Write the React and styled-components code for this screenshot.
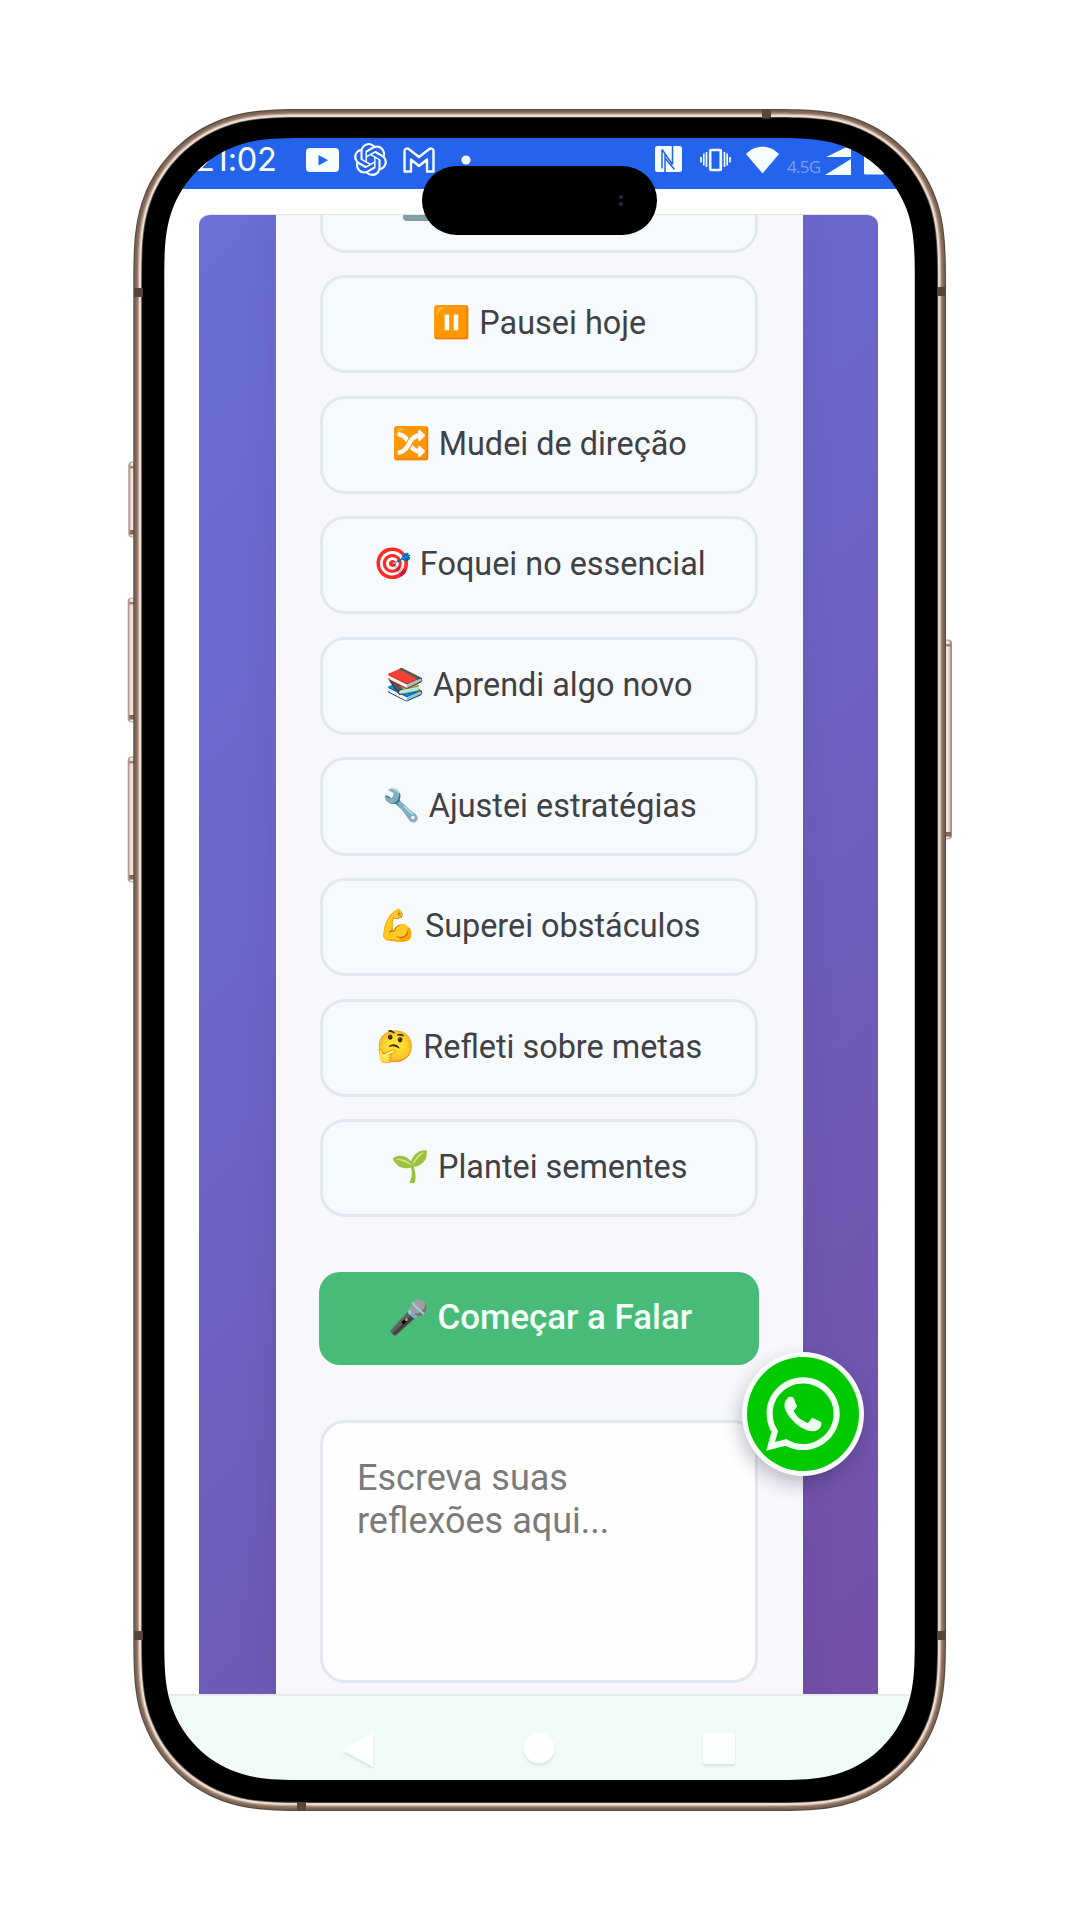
import React from "react";
import styled, { createGlobalStyle, css } from "styled-components";
import { SiOpenai } from "react-icons/si";
import { FaWhatsapp } from "react-icons/fa";

const GlobalStyle = createGlobalStyle`
  * { box-sizing: border-box; }
  html, body { margin: 0; padding: 0; background: #fff; }
  body { font-family: Roboto, "Liberation Sans", sans-serif; }
`;

const Stage = styled.main`
  position: relative;
  width: 1080px;
  height: 1920px;
  padding: 138px 165px 140px 164px;
  overflow: hidden;
  background: #fff;
`;

const Screen = styled.section`
  width: 751px;
  height: 1642px;
  display: flex;
  flex-direction: column;
  overflow: hidden;
  border-radius: 90px;
  background: #fff;
`;

const StatusBar = styled.header`
  flex: none;
  height: 51px;
  padding: 0 31px 8px 31px;
  display: flex;
  align-items: center;
  justify-content: space-between;
  background: #2463eb;
  color: #f6fdff;
`;

const StatusGroup = styled.div`
  height: 100%;
  display: flex;
  align-items: center;
`;

const Clock = styled.span`
  width: 111px;
  font: 400 32.5px/40px Inter, "Open Sans", sans-serif;
  letter-spacing: -0.2px;
`;

const Glyph = styled.span`
  display: flex;
  margin-right: ${(p) => p.$after || 0}px;
  svg { display: block; }
`;

const Network = styled.span`
  width: 38px;
  padding-top: 14px;
  font: 400 17px/20px "Open Sans", sans-serif;
  letter-spacing: -0.7px;
  color: #7ba0f6;
`;

const Page = styled.div`
  flex: none;
  height: 1505px;
  padding: 25px 37px 0 35px;
  background: #fffffe;
`;

const Backdrop = styled.div`
  height: 1480px;
  border-top: 1px solid #e4e3e8;
  border-radius: 11px 11px 0 0;
  padding: 0 75px 0 77px;
  overflow: hidden;
  background: linear-gradient(135deg, #6a70d5 0%, #6c66c9 38%, #6e5cb9 65%, #734fa7 100%);
`;

const Card = styled.div`
  height: 100%;
  padding: 0 45px 0 44px;
  background: #f8f7fc;
  box-shadow: 0 0 30px rgba(60, 50, 90, 0.15);
`;

const Options = styled.div`
  display: flex;
  flex-direction: column;
  gap: 22.3px;
`;

const Option = styled.button`
  width: 100%;
  height: 98.3px;
  padding: 0 0 2px 1px;
  display: flex;
  align-items: center;
  justify-content: center;
  gap: 8.5px;
  border: 3px solid #e2e8f0;
  border-radius: 25px;
  background: #f6fafd;
  color: #404146;
  font: 400 32.4px/40px Roboto, sans-serif;
  white-space: nowrap;
  ${(p) => p.$cut && css`
    height: 37.7px;
    border-top: 0;
    border-radius: 0 0 25px 25px;
    padding: 0 0 0 80px;
    align-items: flex-start;
    justify-content: flex-start;
  `}
`;

const CutBadge = styled.span`
  width: 38px;
  height: 6px;
  border-radius: 0 0 4px 4px;
  background: #7fa0a5;
`;

const Emoji = styled.span`
  width: ${(p) => p.$size + 7}px;
  display: flex;
  justify-content: center;
  font: 400 ${(p) => p.$size}px/40px "Noto Color Emoji", sans-serif;
`;

const SpeakButton = styled(Option)`
  height: 93px;
  width: 440px;
  margin: 54.8px 0 0 -1px;
  padding-left: 3px;
  border: 0;
  border-radius: 21px;
  background: #49bb79;
  color: #f2fff8;
  font-size: 34.9px;
  font-weight: 500;
`;

const NoteField = styled.div`
  height: 263px;
  margin-top: 55px;
  padding: 34px;
  border: 3px solid #e2e7f1;
  border-radius: 25px;
  background: #fefefe;
  color: #7a7a7a;
`;

const Placeholder = styled.p`
  margin: 0;
  width: 340px;
  font: 400 36px/42.5px Roboto, sans-serif;
`;

const NavBar = styled.nav`
  flex: 1;
  padding: 36px 180px 0 178px;
  display: flex;
  justify-content: space-between;
  border-top: 2px solid #e6eced;
  background: #f0fbf8;
  svg { display: block; filter: drop-shadow(0 2px 1px rgba(120, 130, 130, 0.2)); }
`;

const WhatsButton = styled.div`
  position: absolute;
  left: 742px;
  top: 1352px;
  width: 122px;
  height: 124px;
  display: flex;
  align-items: center;
  justify-content: center;
  border: 5px solid #f7fdf8;
  border-radius: 50%;
  background: #00c900;
  color: #effff2;
  box-shadow: -2px 8px 18px rgba(40, 30, 60, 0.28);
`;

const Island = styled.div`
  position: absolute;
  left: 422px;
  top: 165.5px;
  width: 235px;
  height: 69px;
  padding-right: 34px;
  display: flex;
  flex-direction: column;
  align-items: flex-end;
  justify-content: center;
  gap: 3px;
  border-radius: 35px;
  background: #000;
`;

const Sensor = styled.i`
  width: 4px;
  height: 4px;
  border-radius: 50%;
  background: #25255c;
`;

const Bezel = styled.svg`
  position: absolute;
  left: 0;
  top: 0;
  pointer-events: none;
`;

const options = [
  ["⏸️", "Pausei hoje"],
  ["🔀", "Mudei de direção"],
  ["🎯", "Foquei no essencial"],
  ["📚", "Aprendi algo novo"],
  ["🔧", "Ajustei estratégias"],
  ["💪", "Superei obstáculos"],
  ["🤔", "Refleti sobre metas"],
  ["🌱", "Plantei sementes"],
];

// Continuous-curvature rounded rectangle.
function smoothRect(l, t, r, b, k) {
  const corner = (x, y, sx, sy, flip) => {
    const at = (u, v) => {
      const [a, c] = flip ? [v, u] : [u, v];
      return `${x + sx * a * k} ${y + sy * c * k}`;
    };
    return `${at(0, 1.3)} C${at(0, 1.02)} ${at(0, 0.825)} ${at(0.0722, 0.63149)} C${at(0.168, 0.37282)} ${at(0.37282, 0.168)} ${at(0.63149, 0.0722)} C${at(0.825, 0)} ${at(1.02, 0)} ${at(1.3, 0)}`;
  };
  return `M${corner(l, t, 1, 1)} L${corner(r, t, -1, 1, true)} L${corner(r, b, -1, -1)} L${corner(l, b, 1, -1, true)}Z`;
}

const innerEdge = smoothRect(164.3, 138, 914.8, 1780, 113);
const bandEdge = smoothRect(150, 124, 929, 1795, 125);
const rings = [
  [0, "#5b4a40"],
  [1.2, "#7d6656"],
  [3.2, "#93796a"],
  [4.6, "#c3a999"],
  [5.8, "#ecdcd3"],
  [7.9, "#5f5048"],
  [8.8, "#000000"],
];

const sideKeys = [
  [128.8, 462, 75],
  [128.2, 598, 124],
  [128.2, 757, 125],
  [943.5, 640, 199],
];

const bands = [
  [762, 109.5, 9, 9],
  [297, 1802, 9, 9],
  [134, 288, 9, 9],
  [937, 287, 9, 9],
  [134, 1631, 9, 9],
  [937, 1631, 9, 9],
];

function Frame() {
  return (
    <Bezel width="1080" height="1920" viewBox="0 0 1080 1920">
      <defs>
        <linearGradient id="key" x1="0" x2="1">
          <stop offset="0" stopColor="#b59c8c" />
          <stop offset="0.35" stopColor="#f3e9e2" />
          <stop offset="0.7" stopColor="#ead9cf" />
          <stop offset="1" stopColor="#8d7465" />
        </linearGradient>
      </defs>
      {sideKeys.map(([x, y, h]) => (
        <g key={y}>
          <rect x={x} y={y} width="8" height={h} rx="3" fill="url(#key)" stroke="#9d8778" strokeWidth="0.8" />
          <rect x={x + 1} y={y + 4} width="6.5" height="2.4" fill="#9b8272" />
          <rect x={x + 1} y={y + h - 7} width="6.5" height="4.5" fill="#83695a" />
        </g>
      ))}
      {rings.map(([d, fill], i) => (
        <path
          key={d}
          fillRule="evenodd"
          fill={fill}
          d={smoothRect(133.3 + d, 109 + d, 946 - d, 1811 - d, 140 - d) + (i === rings.length - 1 ? innerEdge : bandEdge)}
        />
      ))}
      {bands.map(([x, y, w, h]) => (
        <rect key={`${x}-${y}`} x={x} y={y} width={w} height={h} fill="#56463d" />
      ))}
    </Bezel>
  );
}

function Status() {
  return (
    <StatusBar>
      <StatusGroup>
        <Clock>21:02</Clock>
        <Glyph $after={15}>
          <svg width="33" height="24" viewBox="0 0 33 24">
            <rect width="33" height="24" rx="4" fill="currentColor" />
            <path d="M12.5 7v10.5L22 12.3z" fill="#2463eb" />
          </svg>
        </Glyph>
        <Glyph $after={16}><SiOpenai size={33} /></Glyph>
        <Glyph $after={26}>
          <svg width="32" height="26" viewBox="0 0 32 26" fill="none" stroke="currentColor" strokeWidth="2.4" strokeLinejoin="round">
            <path d="M1.5 24.500V3.500C2 1.500 4.500 1 6 2.200L16 10l10-7.800c1.500-1.200 4-.7 4.500 1.300v21h-6.500V12.500L16 19 8 12.500v12z" />
          </svg>
        </Glyph>
        <Glyph>
          <svg width="10" height="10"><circle cx="5" cy="5" r="4.600" fill="currentColor" /></svg>
        </Glyph>
      </StatusGroup>
      <StatusGroup>
        <Glyph $after={18}>
          <svg width="27" height="27" viewBox="0 0 27 27">
            <rect width="27" height="26" rx="2.500" fill="currentColor" />
            <g fill="none" stroke="#2463eb" strokeWidth="1.500">
              <path d="M7 3.500v19M17.500 0v18.500M7 3.500L17.500 18.500M10 8v18M10 12l9.500 11.500" />
            </g>
          </svg>
        </Glyph>
        <Glyph $after={15}>
          <svg width="31" height="24" viewBox="0 0 31 24" fill="none" stroke="currentColor">
            <rect x="10.200" y="2" width="10.600" height="20" rx="1" strokeWidth="2.600" />
            <path d="M6.500 4v15M24.500 4v15M3.800 5.500v12M27.200 5.500v12M1 9v5.500M30 9v5.500" strokeWidth="1.700" />
          </svg>
        </Glyph>
        <Glyph $after={8}>
          <svg width="33" height="28" viewBox="0 0 33 28">
            <path d="M0 8C9-1.800 24-1.800 33 8L16.500 27.500z" fill="currentColor" />
          </svg>
        </Glyph>
        <Network>4.5G</Network>
        <Glyph $after={13}>
          <svg width="26" height="32" viewBox="0 0 26 32" fill="currentColor">
            <path d="M1 13L26 1v12zM0 31L26 15v16z" />
          </svg>
        </Glyph>
        <Glyph>
          <svg width="20" height="30" viewBox="0 0 20 30" fill="currentColor">
            <path d="M0 5h4V1h12v4h4v23a1.500 1.500 0 0 1-1.500 1.500h-17A1.500 1.500 0 0 1 0 28z" />
          </svg>
        </Glyph>
      </StatusGroup>
    </StatusBar>
  );
}

export default function App() {
  return (
    <>
      <GlobalStyle />
      <Stage>
        <Screen>
          <Status />
          <Page>
            <Backdrop>
              <Card>
                <Options>
                  <Option $cut><CutBadge /></Option>
                  {options.map(([emoji, label]) => (
                    <Option key={label}>
                      <Emoji $size={31}>{emoji}</Emoji>
                      <span>{label}</span>
                    </Option>
                  ))}
                </Options>
                <SpeakButton>
                  <Emoji $size={33}>🎤</Emoji>
                  <span>Começar a Falar</span>
                </SpeakButton>
                <NoteField>
                  <Placeholder>Escreva suas<br />reflexões aqui...</Placeholder>
                </NoteField>
              </Card>
            </Backdrop>
          </Page>
          <NavBar>
            <svg width="32" height="36"><path d="M0 18L31 1v34z" fill="#fdfffe" /></svg>
            <svg width="32" height="36"><circle cx="16" cy="16" r="15.500" fill="#fdfffe" /></svg>
            <svg width="32" height="36"><rect y="1" width="32" height="31" rx="2" fill="#fdfffe" /></svg>
          </NavBar>
        </Screen>
        <WhatsButton><FaWhatsapp size={84} /></WhatsButton>
        <Island><Sensor /><Sensor /></Island>
        <Frame />
      </Stage>
    </>
  );
}
